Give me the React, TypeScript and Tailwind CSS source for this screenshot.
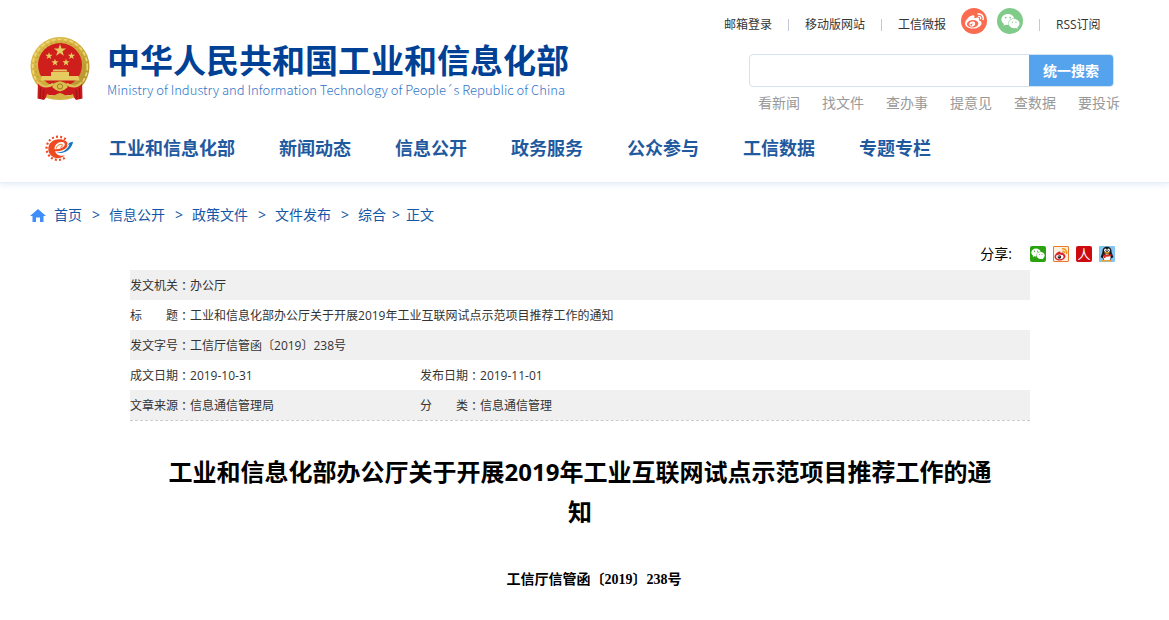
import React from 'react';
import { FaWeibo, FaWeixin } from 'react-icons/fa';

const navItems = ['工业和信息化部', '新闻动态', '信息公开', '政务服务', '公众参与', '工信数据', '专题专栏'];
const quickLinks = ['看新闻', '找文件', '查办事', '提意见', '查数据', '要投诉'];
const crumbs = ['首页', '信息公开', '政策文件', '文件发布', '综合'];

interface Field {
  label: string;
  value: string;
}

const rows: Field[][] = [
  [{ label: '发文机关', value: '办公厅' }],
  [{ label: '标题', value: '工业和信息化部办公厅关于开展2019年工业互联网试点示范项目推荐工作的通知' }],
  [{ label: '发文字号', value: '工信厅信管函〔2019〕238号' }],
  [
    { label: '成文日期', value: '2019-10-31' },
    { label: '发布日期', value: '2019-11-01' },
  ],
  [
    { label: '文章来源', value: '信息通信管理局' },
    { label: '分类', value: '信息通信管理' },
  ],
];

const star = (cx: number, cy: number, r: number) =>
  Array.from({ length: 10 }, (_, i) => {
    const a = (Math.PI / 5) * i - Math.PI / 2;
    const d = i % 2 ? r * 0.4 : r;
    return `${cx + d * Math.cos(a)},${cy + d * Math.sin(a)}`;
  }).join(' ');

const Emblem = () => (
  <svg className="h-16 w-[60px] shrink-0" viewBox="0 0 60 64" aria-hidden="true">
    <defs>
      <linearGradient id="gold" x1="0" y1="0" x2="1" y2="1">
        <stop offset="0" stopColor="#e0c050" />
        <stop offset="0.5" stopColor="#d2ad3a" />
        <stop offset="1" stopColor="#a98a2c" />
      </linearGradient>
    </defs>
    <circle cx="30" cy="29.5" r="29.5" fill="url(#gold)" />
    <circle cx="30" cy="29.5" r="27.3" fill="none" stroke="#ecd87a" strokeWidth="1.6" strokeDasharray="4 2" />
    <circle cx="30" cy="29.5" r="24.5" fill="none" stroke="#b3902d" strokeWidth="0.8" strokeDasharray="2 3" />
    <circle cx="30" cy="28" r="22" fill="#cf1f1c" />
    <g fill="#e6cc60">
      <polygon points={star(30, 13.5, 6.5)} />
      <polygon points={star(19, 19, 3.8)} />
      <polygon points={star(41.5, 19, 3.8)} />
      <polygon points={star(25, 25.5, 3.8)} />
      <polygon points={star(36, 25.5, 3.8)} />
      <path d="M22.5 34.5 L23.5 32.5 H36.5 L37.5 34.5z M21 35 H39 V39 H21z M11.5 39 H48.5 L49.5 43.5 H10.5z" />
    </g>
    <path d="M8 44 C14 50 21 47 30 44 C39 47 46 50 52 44 L50 52 C41 55 36 52 30 53 C24 52 19 55 10 52z" fill="#cba93a" />
    <path d="M8 44 C12 49 17 50 22 48 L25 52 L30 54 L35 52 L38 48 C43 50 48 49 52 44 L52.5 61.5 L46 63 L42 58 L30 59 L18 58 L14 63 L7.5 61.5z" fill="#cb1a1c" />
    <path d="M8 45 C13 51 19 50 23 47 M52 45 C47 51 41 50 37 47" fill="none" stroke="#dcc35c" strokeWidth="2.4" />
    <path d="M22 50 L26 46 L30 45 L34 46 L38 50 L34 53 L30 54.5 L26 53z" fill="#dcc050" />
    <circle cx="30" cy="49.5" r="2.6" fill="none" stroke="#9b7a22" strokeWidth="1" />
    <path d="M17 57 Q23 60 27 57 L30 56 L33 57 Q37 60 43 57 L44 61 Q37 63 30 63 Q23 63 16 61z" fill="#d3b342" />
    <path d="M10.5 51 L10 62 M14 53 L13 62 M49.5 51 L50 62 M46 53 L47 62" stroke="#8d1013" strokeWidth="0.8" />
  </svg>
);

const GearLogo = () => (
  <svg className="h-[27px] w-[30px]" viewBox="0 0 30 27" aria-hidden="true">
    <path
      d="M21.6 4.4A11.6 11.6 0 1 0 22 21.8"
      fill="none"
      stroke="#ee4a22"
      strokeWidth="2.2"
      strokeDasharray="2 2.1"
    />
    <path
      d="M21 20.2C15.5 25.2 7.6 23.6 5 17.6C2.4 11 7 4.6 14.2 4.2C20 3.8 24.4 6.4 23.6 10.2C22.8 14 17.2 16.8 11 16.2C12.4 20.6 17.4 21.4 21 20.2z"
      fill="#ee4a22"
    />
    <path d="M10.6 14.2C10.2 9.6 14.4 6.6 18.2 7C21.4 7.4 21.6 10.2 19.2 12C17 13.7 13.6 14.4 10.6 14.2z" fill="#fff" />
    <path d="M12 13.6C12.4 11 15.4 9 17.6 9.4C19 9.8 18.2 11.6 16.4 12.6" fill="none" stroke="#f58549" strokeWidth="1.1" />
    <path d="M11.4 17.2C17.6 18 22.6 14.6 24.6 9.8L22.6 10.2C24.2 7.4 26.8 6 29.4 6.2C28.6 13.6 20.4 21.2 11.4 17.2z" fill="#fff" />
    <path d="M12.4 17.4C18.6 18 23.2 14.8 25.4 9.6L23.8 9.8C25.2 7.6 27 6.8 29 6.8C28.4 13.4 20.6 20.2 12.4 17.4z" fill="#1976bd" />
  </svg>
);

const HomeIcon = () => (
  <svg className="h-[13px] w-4" viewBox="0 0 16 13" fill="#3f8efc" aria-hidden="true">
    <path d="M8 0L16 7H13.5V13H10V8.5H6V13H2.5V7H0z" />
  </svg>
);

const Penguin = () => (
  <svg className="h-4 w-4" viewBox="0 0 16 16" aria-hidden="true">
    <rect width="16" height="16" rx="1" fill="#83c4f0" />
    <path d="M8 0.8C4.4 0.8 3.4 3.4 3.4 6.5L1.6 11.3L3.4 12L5 14.5H11L12.6 12L14.4 11.3L12.6 6.5C12.6 3.4 11.6 0.8 8 0.8z" fill="#161616" />
    <ellipse cx="8" cy="11.4" rx="3.6" ry="3.2" fill="#fff" />
    <ellipse cx="6.4" cy="4.3" rx="1.3" ry="1.7" fill="#fff" />
    <ellipse cx="9.6" cy="4.3" rx="1.3" ry="1.7" fill="#fff" />
    <circle cx="6.9" cy="4.6" r="0.5" />
    <circle cx="9.2" cy="4.6" r="0.5" />
    <ellipse cx="8" cy="6.8" rx="2.8" ry="0.9" fill="#f7a21b" />
    <path d="M3.6 8Q8 10 12.4 8V9.7Q8 11.2 6.6 10.4V12H5V10z" fill="#df2a25" />
    <path d="M3 14H7.5V15.5H3zM8.5 14H13V15.5H8.5z" fill="#f7a21b" />
  </svg>
);

const WeiboBadge = () => (
  <svg className="h-4 w-4" viewBox="0 0 16 16" aria-hidden="true">
    <rect x="0.5" y="0.5" width="15" height="15" rx="0.5" fill="#fdf0df" stroke="#e9792f" />
    <path d="M1.5 10.5C2 7.6 5.5 4.6 7.2 5.6C7.8 6 7.5 7 7.5 7C9 6.2 11 6.3 10.8 8C13.5 8.8 13 13 8.5 14.3C5 15.2 1.2 13.6 1.5 10.5z" fill="#d9232a" />
    <ellipse cx="6.8" cy="10.8" rx="3.7" ry="2.4" fill="#fff" />
    <circle cx="6.4" cy="11" r="1.8" fill="#1c1c1c" />
    <circle cx="6" cy="10.6" r="0.5" fill="#fff" />
    <path d="M9 3C12 2.2 14.4 5 13.4 8M9.5 5.2Q11.6 5 11.6 7.2" fill="none" stroke="#f29a1f" strokeWidth="1.5" />
  </svg>
);

const Divider = () => <span className="h-3 w-px bg-[#c3c9d6]" />;

const FieldLabel = ({ label }: { label: string }) => (
  <span className="inline-flex">
    <span className="flex w-12 justify-between">
      {label.split('').map((ch) => (
        <span key={ch}>{ch}</span>
      ))}
    </span>
    <span className="font-['Noto_Sans_CJK_TC',sans-serif]">：</span>
  </span>
);

const Header = () => (
  <header className="border-b border-[#e6eef7] pb-[5px] shadow-[0_2px_6px_#e6eef7]">
    <div className="flex items-start justify-between pt-2 pr-[49px] pl-[30px]">
      <a href="#" className="flex gap-[17px] pt-[29px] whitespace-nowrap">
        <Emblem />
        <span className="flex flex-col pt-1">
          <span className="text-[33px] leading-10 font-bold text-[#004196]">中华人民共和国工业和信息化部</span>
          <span className="font-['Noto_Sans_CJK_SC',sans-serif] text-[13px] leading-[18px] font-light text-[#2f76c8]">
            Ministry of Industry and Information Technology of People´s Republic of China
          </span>
        </span>
      </a>

      <div className="whitespace-nowrap">
        <div className="flex h-[34px] items-center gap-4 text-xs text-[#333]">
          <a href="#">邮箱登录</a>
          <Divider />
          <a href="#">移动版网站</a>
          <Divider />
          <a href="#">工信微报</a>
          <span className="-ml-px flex gap-[10px] self-start">
            <a href="#" aria-label="微博" className="flex h-[26px] w-[26px] items-center justify-center rounded-full bg-[#fb6b50] text-white">
              <FaWeibo size={19} />
            </a>
            <a href="#" aria-label="微信" className="flex h-[26px] w-[26px] items-center justify-center rounded-full bg-[#80cb8a] text-white">
              <FaWeixin size={19} />
            </a>
          </span>
          <Divider />
          <a href="#">RSS订阅</a>
        </div>
        <form className="mt-3 mr-[6px] ml-[25px] flex h-[33px] overflow-hidden rounded border border-[#d3e2ee]" onSubmit={(e) => e.preventDefault()}>
          <input type="text" aria-label="搜索" className="min-w-0 flex-1 px-2 text-sm outline-none" />
          <button type="submit" className="w-[84px] bg-[#55a3ec] text-sm font-bold text-white">
            统一搜索
          </button>
        </form>
        <div className="flex gap-[22px] pl-[34px] text-sm leading-8 text-[#999]">
          {quickLinks.map((link) => (
            <a key={link} href="#">{link}</a>
          ))}
        </div>
      </div>
    </div>

    <nav className="flex h-[58px] items-center pl-11">
      <a href="#" aria-label="首页">
        <GearLogo />
      </a>
      <div className="ml-[35px] flex gap-11 text-lg font-bold whitespace-nowrap text-[#1f5a9f]">
        {navItems.map((item) => (
          <a key={item} href="#">{item}</a>
        ))}
      </div>
    </nav>
  </header>
);

export default function App() {
  return (
    <div className="bg-white font-['Open_Sans','Noto_Sans_CJK_SC',sans-serif] text-[#333]">
      <Header />

      <main className="pr-[39px] pl-[30px]">
        <div className="flex h-[63px] items-center pt-px text-sm text-[#1357a6]">
          <HomeIcon />
          <span className="ml-2 flex">
            {crumbs.map((crumb, i) => (
              <span key={crumb} className="flex">
                <a href="#">{crumb}</a>
                <span className={i === crumbs.length - 1 ? 'px-[6px]' : 'pr-[9px] pl-[10px]'}>&gt;</span>
              </span>
            ))}
            <span>正文</span>
          </span>
        </div>

        <div className="flex items-center justify-end gap-[18px] pr-[15px] pb-2 text-sm leading-4 text-black">
          <span>分享:</span>
          <div className="flex gap-[7px]">
            <a href="#" aria-label="分享到微信" className="flex h-4 w-4 items-center justify-center rounded-xs bg-[#2ba20f] text-white">
              <FaWeixin size={14} />
            </a>
            <a href="#" aria-label="分享到微博"><WeiboBadge /></a>
            <a href="#" className="flex h-4 w-4 items-center justify-center rounded-xs bg-[#cc0a10] text-[13px] leading-4 text-white">
              人
            </a>
            <a href="#" aria-label="分享到QQ"><Penguin /></a>
          </div>
        </div>

        <article className="px-[100px]">
          <table className="w-full table-fixed border-b border-dashed border-[#ccc] text-xs">
            <colgroup>
              <col className="w-[290px]" />
              <col />
            </colgroup>
            <tbody>
              {rows.map((row, i) => (
                <tr key={i} className="h-[30px] odd:bg-[#f0f0f0]">
                  {row.map((field) => (
                    <td key={field.label} colSpan={row.length === 1 ? 2 : 1} className="p-0 pt-[2px] whitespace-nowrap">
                      <FieldLabel label={field.label} />
                      {field.value}
                    </td>
                  ))}
                </tr>
              ))}
            </tbody>
          </table>

          <h1 className="mt-[31px] px-[35px] text-center text-2xl leading-10 font-bold text-black">
            工业和信息化部办公厅关于开展2019年工业互联网试点示范项目推荐工作的通知
          </h1>

          <p className="mt-[33px] text-center indent-[28px] font-['Liberation_Serif','Noto_Sans_CJK_SC',serif] text-sm leading-[30px] font-bold text-black">
            工信厅信管函〔2019〕238号
          </p>
        </article>
      </main>
    </div>
  );
}
